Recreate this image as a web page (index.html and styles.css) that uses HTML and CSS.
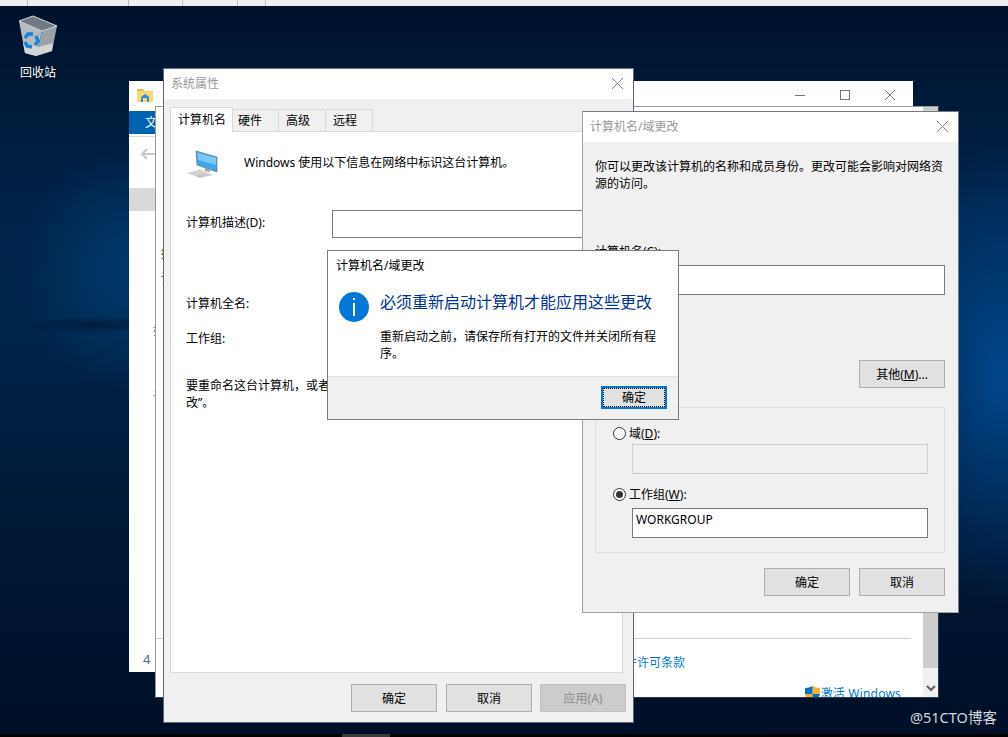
FILE: index.html
```html
<!DOCTYPE html>
<html lang="zh-CN">
<head>
  <meta charset="UTF-8">
  <title>计算机名/域更改</title>
  <link rel="stylesheet" href="styles.css">
</head>
<body>

<div class="desktop">
  <!-- barra de arriba -->
  <div class="top-strip">
    <span class="tick t1"></span>
    <span class="tick t2"></span>
    <span class="tick t3"></span>
    <span class="tick t4"></span>
    <span class="tick t5"></span>
  </div>

  <div class="desk-icon">
    <svg width="40" height="42" viewBox="18 15 40 42">
      <path d="M19 21 L42 31 L36 56 L25 53 Z" fill="#b4bbc1"/>
      <path d="M42 31 L57 26 L52 51 L36 56 Z" fill="#99a2a9"/>
      <path d="M23 43 L38 47 L53 43 L52 51 L36 56 L25 53 Z" fill="#d2d5d8"/>
      <path d="M19 21 L33 16 L57 26 L42 31 Z" fill="#6f7a84" stroke="#d5d9dc" stroke-width="1"/>
      <g fill="none" stroke="#1483dc" stroke-width="3.4">
        <path d="M25 38 L28 34 L33 34"/>
        <path d="M36 36 L38 41 L35 45"/>
        <path d="M32 47 L27 46 L25 42"/>
      </g>
    </svg>
    <span class="desk-label">回收站</span>
  </div>

  <!-- explorador de atras -->
  <div class="win win-explorer">
    <div class="exp-title">
      <svg class="folder-ico" width="16" height="14" viewBox="0 0 16 14">
        <path d="M0 1 H6 L7 3 H16 V14 H0 Z" fill="#f8d775"/>
        <path d="M0 1 H6 L7 3 H0 Z" fill="#e8b93e"/>
        <path d="M4 14 V9 L8 6 L12 9 V14 H10 V10 H6 V14 Z" fill="#2f8fd8"/>
      </svg>
      <div class="win-btns">
        <svg width="10" height="10" viewBox="0 0 10 10"><path d="M0 5.5 H10" stroke="#777"/></svg>
        <svg width="10" height="10" viewBox="0 0 10 10"><rect x="0.5" y="0.5" width="9" height="9" fill="none" stroke="#777"/></svg>
        <svg width="10" height="10" viewBox="0 0 10 10"><path d="M0 0 L10 10 M10 0 L0 10" stroke="#777"/></svg>
      </div>
    </div>
    <div class="ribbon"><span class="ribbon-tab">文件</span></div>
    <div class="exp-nav">
      <svg width="14" height="12" viewBox="0 0 14 12"><path d="M6 1 L1 6 L6 11 M1 6 H14" fill="none" stroke="#c8c8c8" stroke-width="2"/></svg>
    </div>
    <div class="exp-selected"></div>
    <div class="exp-link first">控制</div>
    <div class="exp-link second">设置</div>
    <div class="exp-num">4</div>
  </div>

  <!-- ventana del sistema -->
  <div class="win win-system">
    <div class="sys-main">
      <div class="sys-nav">
        <div>控</div>
        <div>设</div>
      </div>
      <div class="sys-rule"></div>
      <div class="sys-license">软件许可条款</div>
      <div class="sys-activate">
        <svg width="15" height="16" viewBox="0 0 15 16">
          <path d="M7.5 0 Q11 2 15 2 V8 H7.5 Z" fill="#f7b32b"/>
          <path d="M7.5 0 Q4 2 0 2 V8 H7.5 Z" fill="#0a6fc9"/>
          <path d="M0 8 H7.5 V16 Q1 13 0 8 Z" fill="#f7b32b"/>
          <path d="M15 8 H7.5 V16 Q14 13 15 8 Z" fill="#0a6fc9"/>
        </svg>
        <span>激活 Windows</span>
      </div>
    </div>
    <div class="scrollbar">
      <div class="thumb"></div>
      <div class="scroll-end">
        <svg width="10" height="7" viewBox="0 0 10 7"><path d="M1 1 L5 5 L9 1" fill="none" stroke="#606060" stroke-width="2"/></svg>
      </div>
    </div>
  </div>

  <!-- 系统属性 -->
  <div class="win dialog win-props">
    <div class="title-bar">
      <span>系统属性</span>
      <svg width="11" height="11" viewBox="0 0 11 11"><path d="M0 0 L11 11 M11 0 L0 11" stroke="#808080"/></svg>
    </div>
    <div class="props-body">
      <div class="tabs">
        <div class="tab active">计算机名</div>
        <div class="tab">硬件</div>
        <div class="tab">高级</div>
        <div class="tab">远程</div>
      </div>
      <div class="panel">
        <div class="pc-row">
          <svg width="32" height="28" viewBox="186 150 32 28">
            <path d="M196 151 L217 157 V172 L197 165 Z" fill="#3fa9ec" stroke="#6b7680" stroke-width="0.7"/>
            <path d="M198 153 L216 158 V165 L198 160 Z" fill="#7cc8f5"/>
            <path d="M205 168 L210 170 V172 L205 171 Z" fill="#9aa3aa"/>
            <path d="M187 173 L200 169 L213 175 L200 178 Z" fill="#c9c9c9"/>
            <path d="M190 173 L200 170 L210 175 M193 175 L203 172" stroke="#eeeeee" stroke-width="0.7" fill="none"/>
          </svg>
          <p>Windows 使用以下信息在网络中标识这台计算机。</p>
        </div>
        <div class="desc-row">
          <label>计算机描述(D):</label>
          <div class="field field-desc"></div>
        </div>
        <p class="full-name">计算机全名:</p>
        <p class="group-name">工作组:</p>
        <p class="rename">要重命名这台计算机，或者更改其域或工作组，请单击“更<br>改”。</p>
      </div>
      <div class="btn-row props-btns">
        <button class="btn">确定</button>
        <button class="btn">取消</button>
        <button class="btn off">应用(A)</button>
      </div>
    </div>
  </div>

  <!-- 计算机名/域更改 -->
  <div class="win dialog win-domain">
    <div class="title-bar">
      <span>计算机名/域更改</span>
      <svg width="11" height="11" viewBox="0 0 11 11"><path d="M0 0 L11 11 M11 0 L0 11" stroke="#808080"/></svg>
    </div>
    <div class="domain-body">
      <p class="intro">你可以更改该计算机的名称和成员身份。更改可能会影响对网络资源的访问。</p>
      <p class="name-label">计算机名(C):</p>
      <div class="field field-name"></div>
      <div class="other-row"><button class="btn">其他(<u>M</u>)...</button></div>
      <div class="member-box">
        <div class="radio-row"><span class="radio"></span><span>域(<u>D</u>):</span></div>
        <div class="field field-off"></div>
        <div class="radio-row row-two"><span class="radio on"></span><span>工作组(<u>W</u>):</span></div>
        <div class="field field-wg">WORKGROUP</div>
      </div>
      <div class="btn-row domain-btns">
        <button class="btn">确定</button>
        <button class="btn">取消</button>
      </div>
    </div>
  </div>

  <!-- mensaje -->
  <div class="win win-msg">
    <div class="msg-title">计算机名/域更改</div>
    <div class="msg-main">
      <svg width="30" height="30" viewBox="0 0 30 30">
        <circle cx="15" cy="15" r="15" fill="#0078d7"/>
        <rect x="14" y="11" width="2" height="13" fill="#fff"/>
        <rect x="14" y="6" width="2" height="2" fill="#fff"/>
      </svg>
      <div class="msg-text">
        <h2>必须重新启动计算机才能应用这些更改</h2>
        <p>重新启动之前，请保存所有打开的文件并关闭所有程序。</p>
      </div>
    </div>
    <div class="msg-foot"><button class="btn focus">确定</button></div>
  </div>

  <div class="watermark">@51CTO博客</div>
  <div class="bottom-strip"><span class="task-bit"></span></div>
</div>

</body>
</html>
```

FILE: styles.css
```css
* {
  margin: 0;
  padding: 0;
  box-sizing: border-box;
}

body {
  font-family: "Noto Sans", "Noto Sans CJK SC", sans-serif;
  font-size: 12px;
  line-height: 17px;
  color: #000;
  overflow: hidden;
}

.desktop {
  position: relative;
  width: 1008px;
  height: 737px;
  overflow: hidden;
  background:
    radial-gradient(ellipse 80px 9px at 95px 325px, rgba(1,22,46,0.7) 0%, rgba(1,22,46,0) 100%),
    radial-gradient(ellipse 120px 230px at 1000px 375px, #00468a 0%, rgba(0,70,138,0) 100%),
    radial-gradient(ellipse 110px 120px at 130px 270px, #003a6d 0%, rgba(0,58,109,0) 100%),
    linear-gradient(180deg, #00112a 0%, #00234a 28%, #00264c 44%, #001a3a 65%, #000f27 100%);
}

/* tiras de arriba y abajo */
.top-strip {
  height: 6px;
  background: #f0f0f0;
  position: relative;
}

.tick {
  position: absolute;
  top: 0;
  width: 1px;
  height: 6px;
  background: #bdbdbd;
}

.t1 { left: 27px; }
.t2 { left: 128px; }
.t3 { left: 182px; }
.t4 { left: 237px; }
.t5 { left: 265px; }

.bottom-strip {
  position: absolute;
  left: 0;
  right: 0;
  bottom: 0;
  height: 3px;
  background: #000;
}

.task-bit {
  display: block;
  width: 48px;
  height: 3px;
  margin-left: 342px;
  background: #3a3a3a;
}

.desk-icon {
  position: absolute;
  left: 8px;
  top: 15px;
  width: 60px;
  display: flex;
  flex-direction: column;
  align-items: center;
}

.desk-label {
  margin-top: 7px;
  color: #fff;
  text-shadow: 0 1px 2px rgba(0,0,0,0.8);
}

.watermark {
  position: absolute;
  left: 910px;
  top: 709px;
  font-size: 14.5px;
  color: #d4d6d9;
}

/* ventanas */
.win {
  position: absolute;
  background: #fff;
  overflow: hidden;
}

.dialog {
  background: #f0f0f0;
  display: flex;
  flex-direction: column;
}

.title-bar {
  height: 30px;
  flex: none;
  background: #fff;
  color: #999;
  display: flex;
  align-items: center;
  justify-content: space-between;
  padding: 0 10px 2px 7px;
}

.btn {
  width: 86px;
  height: 28px;
  background: #e1e1e1;
  border: 1px solid #adadad;
  font: inherit;
  color: #000;
}

.btn.off {
  background: #cccccc;
  color: #8a8a8a;
  border-color: #bfbfbf;
}

.btn.focus {
  width: 66px;
  height: 23px;
  border: 2px solid #0078d7;
  outline: 1px dotted #000;
  outline-offset: -3px;
}

.btn-row {
  display: flex;
  justify-content: flex-end;
  gap: 9px;
}

.field {
  background: #fff;
  border: 1px solid #7a7a7a;
}

/* explorador */
.win-explorer {
  left: 129px;
  top: 81px;
  width: 784px;
  height: 591px;
}

.exp-title {
  height: 30px;
  display: flex;
  align-items: center;
  justify-content: space-between;
  padding: 0 18px 2px 8px;
}

.win-btns {
  display: flex;
  gap: 35px;
}

.ribbon {
  height: 26px;
  border-bottom: 1px solid #d9d9d9;
}

.ribbon-tab {
  display: block;
  width: 60px;
  height: 23px;
  padding: 3px 0 0 16px;
  background: #0063b1;
  color: #fff;
}

.exp-nav {
  height: 34px;
  padding-left: 12px;
  display: flex;
  align-items: center;
}

.exp-selected {
  margin-top: 17px;
  height: 23px;
  background: #d9d9d9;
}

.exp-link {
  padding-left: 24px;
  color: #1979ca;
}

.exp-link.first { margin-top: 111px; }
.exp-link.second { margin-top: 50px; }

.exp-num {
  margin-top: 245px;
  padding-left: 14px;
  font-size: 13px;
  color: #3f6790;
}

/* sistema */
.win-system {
  left: 155px;
  top: 106px;
  width: 784px;
  height: 592px;
  border-top: 1px solid #9a9a9a;
  border-left: 1px solid #9a9a9a;
  border-right: 1px solid #2f3a48;
  border-bottom: 1px solid #2f3a48;
  display: flex;
}

.sys-main {
  flex: 1;
  padding-right: 12px;
  overflow: hidden;
}

.sys-nav {
  height: 531px;
  padding: 138px 0 0 5px;
  color: #222;
}

.sys-nav div + div {
  margin-top: 8px;
}

.sys-rule {
  height: 1px;
  background: #d0d0d0;
}

.sys-license {
  margin-top: 15px;
  padding-left: 457px;
  color: #0078d7;
}

.sys-activate {
  margin-top: 14px;
  display: flex;
  justify-content: flex-end;
  align-items: center;
  padding-right: 10px;
  color: #0078d7;
  letter-spacing: 0.2px;
}

.sys-activate svg {
  margin-right: 1px;
}

.scrollbar {
  width: 15px;
  background: #f0f0f0;
  display: flex;
  flex-direction: column;
}

.thumb {
  flex: 1;
  background: #cdcdcd;
}

.scroll-end {
  height: 29px;
  display: flex;
  justify-content: center;
  align-items: flex-end;
  padding-bottom: 5px;
}

/* 系统属性 */
.win-props {
  left: 163px;
  top: 68px;
  width: 471px;
  height: 655px;
  border: 1px solid #5d6875;
  border-top-color: #6b7682;
}

.props-body {
  flex: 1;
  padding: 9px 10px 0 6px;
}

.tabs {
  display: flex;
  align-items: flex-end;
  height: 24px;
  margin-bottom: -1px;
  position: relative;
}

.tab {
  height: 23px;
  padding: 2px 0 0 7px;
  width: 47px;
  background: #f0f0f0;
  border: 1px solid #d9d9d9;
  border-left: none;
}

.tab:nth-child(2) {
  width: 46px;
  padding-left: 5px;
}

.tab.active {
  width: 63px;
  height: 25px;
  padding-top: 3px;
  background: #fff;
  border-left: 1px solid #d9d9d9;
  border-bottom: none;
}

.panel {
  height: 542px;
  background: #fff;
  border: 1px solid #d9d9d9;
  padding: 18px 0 0 15px;
}

.pc-row {
  display: flex;
  gap: 26px;
  height: 28px;
}

.pc-row p {
  margin-top: 4px;
}

.desc-row {
  margin-top: 32px;
  display: flex;
  align-items: flex-start;
}

.desc-row label {
  width: 146px;
  margin-top: 4px;
}

.field-desc {
  width: 280px;
  height: 28px;
}

.full-name {
  margin-top: 57px;
}

.group-name {
  margin-top: 18px;
}

.rename {
  margin-top: 30px;
}

.props-btns {
  margin-top: 11px;
  margin-right: -3px;
}

.props-btns .off {
  margin-left: -1px;
}

/* 域更改 */
.win-domain {
  left: 582px;
  top: 111px;
  width: 377px;
  height: 502px;
  border: 1px solid #a0a0a0;
  border-right-color: #6f7a85;
  border-top-color: #6f7a85;
}

.domain-body {
  flex: 1;
  padding: 16px 13px 0 12px;
}

.intro {
  width: 350px;
}

.name-label {
  margin-top: 51px;
}

.field-name {
  margin-top: 5px;
  height: 30px;
}

.other-row {
  margin-top: 65px;
  display: flex;
  justify-content: flex-end;
}

.member-box {
  margin-top: 19px;
  height: 146px;
  border: 1px solid #dcdcdc;
  padding: 17px 16px 0 17px;
}

.radio-row {
  display: flex;
  align-items: center;
  gap: 3px;
}

.row-two {
  margin-top: 12px;
}

.radio {
  width: 13px;
  height: 13px;
  border: 1px solid #333;
  border-radius: 50%;
  background: #fff;
  display: flex;
  align-items: center;
  justify-content: center;
}

.radio.on::after {
  content: "";
  width: 7px;
  height: 7px;
  border-radius: 50%;
  background: #333;
}

.field-off {
  margin: 2px 0 0 19px;
  height: 30px;
  background: #f0f0f0;
  border: 1px solid #cccccc;
}

.field-wg {
  margin: 5px 0 0 19px;
  height: 30px;
  padding: 2px 3px;
}

.domain-btns {
  margin-top: 15px;
}

/* mensaje */
.win-msg {
  left: 327px;
  top: 250px;
  width: 352px;
  height: 170px;
  border: 1px solid #7a7a7a;
  display: flex;
  flex-direction: column;
}

.msg-title {
  height: 30px;
  padding: 6px 0 0 8px;
}

.msg-main {
  flex: 1;
  display: flex;
  gap: 11px;
  padding: 11px 0 0 11px;
}

.msg-text {
  width: 280px;
}

.msg-text h2 {
  font-size: 16px;
  font-weight: normal;
  line-height: 21px;
  color: #003399;
  white-space: nowrap;
}

.msg-text p {
  margin-top: 15px;
}

.msg-foot {
  height: 43px;
  background: #f0f0f0;
  border-top: 1px solid #dfdfdf;
  padding: 9px 11px 0 0;
  display: flex;
  justify-content: flex-end;
  align-items: flex-start;
}
```
